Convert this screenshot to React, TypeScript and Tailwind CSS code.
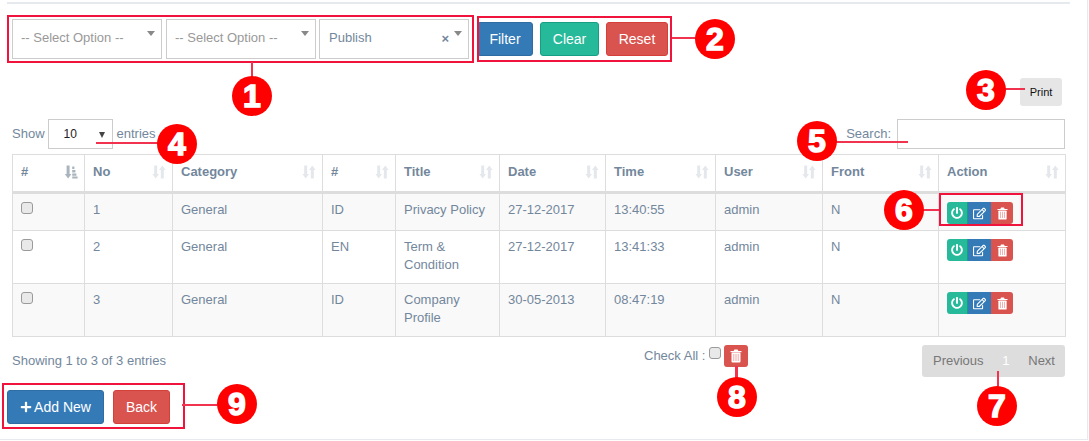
import { FaPlus, FaPowerOff, FaRegEdit } from 'react-icons/fa';

const columns = [
  { label: '#', width: 72, active: true },
  { label: 'No', width: 88 },
  { label: 'Category', width: 150 },
  { label: '#', width: 73 },
  { label: 'Title', width: 104 },
  { label: 'Date', width: 106 },
  { label: 'Time', width: 110 },
  { label: 'User', width: 107 },
  { label: 'Front', width: 116 },
  { label: 'Action', width: 127 },
];

const rows = [
  { no: 1, lang: 'ID', title: 'Privacy Policy', date: '27-12-2017', time: '13:40:55', height: 'h-[38px]', bg: 'bg-[#f9f9f9]' },
  { no: 2, lang: 'EN', title: 'Term & Condition', date: '27-12-2017', time: '13:41:33', height: 'h-[53px]', bg: 'bg-white' },
  { no: 3, lang: 'ID', title: 'Company Profile', date: '30-05-2013', time: '08:47:19', height: 'h-[53px]', bg: 'bg-[#f9f9f9]' },
];

// callouts sit on top of the screenshot, so these are absolute on purpose
const callouts = [
  { n: '1', pos: 'left-[232px] top-[76px]' },
  { n: '2', pos: 'left-[695px] top-[19px]' },
  { n: '3', pos: 'left-[966px] top-[70px]' },
  { n: '4', pos: 'left-[157px] top-[124px]' },
  { n: '5', pos: 'left-[797px] top-[121px]' },
  { n: '6', pos: 'left-[884px] top-[190px]' },
  { n: '7', pos: 'left-[977px] top-[386px]' },
  { n: '8', pos: 'left-[717px] top-[377px]' },
  { n: '9', pos: 'left-[217px] top-[384px]' },
];

const boxes = [
  'left-[7px] top-[15px] w-[467px] h-[48px]',
  'left-[477px] top-[16px] w-[195px] h-[46px]',
  'left-[939px] top-[193px] w-[84px] h-[33px]',
  'left-[2px] top-[383px] w-[183px] h-[46px]',
];

const lines = [
  'left-[251px] top-[62px] w-[2px] h-[16px]',
  'left-[672px] top-[37px] w-[24px] h-[2px]',
  'left-[1005px] top-[88px] w-[20px] h-[2px]',
  'left-[96px] top-[142px] w-[62px] h-[2px]',
  'left-[836px] top-[141px] w-[72px] h-[2px]',
  'left-[923px] top-[209px] w-[16px] h-[2px]',
  'left-[997px] top-[371px] w-[2px] h-[17px]',
  'left-[735px] top-[366px] w-[3px] h-[13px]',
  'left-[182px] top-[404px] w-[36px] h-[2px]',
];

function SortIcon({ active }: { active?: boolean }) {
  if (active) {
    return (
      <svg viewBox="0 0 14 14" className="h-[14px] w-[14px] text-[#aab4be]" fill="currentColor">
        <path d="M2.6.5h3v8.6h1.8L4.1 13.5.8 9.1h1.8z" />
        <path d="M8.2 1.5h2.2v2.4H8.2zM8.2 5h3.2v2.4H8.2zM8.2 8.5h4.2v2.2H8.2zM8.2 11.6h5.4v2H8.2z" />
      </svg>
    );
  }
  return (
    <svg viewBox="0 0 14 14" className="h-[14px] w-[14px] text-[#e4e8ec]" fill="currentColor">
      <path d="M2.2.5h3v8.6H7L3.7 13.5.4 9.1h1.8z" />
      <path d="M8.8 13.5h3V4.9h1.8L10.3.5 7 4.9h1.8z" />
    </svg>
  );
}

function TrashIcon({ className }: { className: string }) {
  return (
    <svg viewBox="0 0 12 14" className={className}>
      <path d="M3.6 2 4.4.5h3.2L8.4 2h3.1v1.2H.5V2z" fill="#ffffff" />
      <rect x="1.5" y="3.6" width="9" height="10" rx="1" fill="#ffffff" />
      <path d="M3.3 5h1v7h-1zM5.5 5h1v7h-1zM7.7 5h1v7h-1z" fill="#f0aaa8" />
    </svg>
  );
}

function FilterSelect({ label, clear }: { label: string; clear?: boolean }) {
  return (
    <div className={`relative flex h-[40px] w-[150px] items-center border border-[#cccccc] pb-[2px] text-[#999999] ${clear ? 'pl-[9px]' : 'pl-[8px]'}`}>
      <span className={clear ? 'text-[#73879C]' : ''}>{label}</span>
      {clear && <span className="absolute right-[19px] top-[10px] text-[13px] font-bold text-[#73879C]">×</span>}
      <span className="absolute right-[6px] top-[11px] h-0 w-0 border-x-[4px] border-t-[5px] border-x-transparent border-t-[#888888]" />
    </div>
  );
}

function Check() {
  return <input type="checkbox" className="m-0 block h-[12px] w-[12px] appearance-none rounded-[3px] border border-[#9a9a9a] bg-[#e9e9e9]" />;
}

function ActionButtons() {
  return (
    <div className="flex h-[22px] w-[66px] overflow-hidden rounded-[3px] text-white">
      <span className="flex w-[21px] items-center justify-center border-r border-[#169F85] bg-[#26B99A] text-[12px]"><FaPowerOff /></span>
      <span className="flex w-[23px] items-center justify-center bg-[#337ab7] text-[13px]"><FaRegEdit /></span>
      <span className="flex w-[22px] items-center justify-center bg-[#d9534f]"><TrashIcon className="h-[13px] w-[11px]" /></span>
    </div>
  );
}

export default function App() {
  const cell = 'border border-[#dddddd] pt-[7px] pr-[8px] pl-[8px] align-top';
  return (
    <div className="relative h-[441px] w-[1089px] overflow-hidden bg-white font-['Liberation_Sans',Arial,sans-serif] text-[13px] leading-[18px] text-[#73879C]">
      <div className="h-[440px] w-[1088px] border-r border-b border-[#E6E9ED] pt-[2px]">
        <div className="ml-[7px] h-[2px] w-[1063px] bg-[#E6E9ED]" />

        {/* Filters */}
        <div className="mt-[15px] flex items-start pl-[12px]">
          <FilterSelect label="-- Select Option --" />
          <div className="w-[4px]" />
          <FilterSelect label="-- Select Option --" />
          <div className="w-[3px]" />
          <FilterSelect label="Publish" clear />
          <div className="mt-[3px] ml-[8px] flex gap-[7px] text-[14px] text-white">
            <button className="h-[34px] w-[56px] rounded-[3px] border border-[#2e6da4] bg-[#337ab7]">Filter</button>
            <button className="h-[34px] w-[59px] rounded-[3px] border border-[#169F85] bg-[#26B99A]">Clear</button>
            <button className="h-[34px] w-[62px] rounded-[3px] border border-[#d43f3a] bg-[#d9534f]">Reset</button>
          </div>
        </div>

        <div className="mt-[19px] flex justify-end pr-[25px]">
          <button className="h-[28px] w-[42px] rounded-[3px] bg-[#e6e6e6] text-[11px] text-[#111111]">Print</button>
        </div>

        {/* Length + search */}
        <div className="mt-[13px] flex items-center justify-between pr-[22px] pl-[12px]">
          <div className="flex items-center">
            <span>Show</span>
            <div className="relative mr-[4px] ml-[3px] flex h-[30px] w-[65px] items-center border border-[#cccccc] pl-[15px] text-[12px] text-[#222222]">
              10
              <span className="absolute right-[7px] top-[12px] h-0 w-0 border-x-[3.5px] border-t-[6px] border-x-transparent border-t-[#444444]" />
            </div>
            <span>entries</span>
          </div>
          <div className="flex items-center gap-[6px]">
            <span>Search:</span>
            <input className="h-[30px] w-[168px] border border-[#cccccc] outline-none" />
          </div>
        </div>

        {/* Table */}
        <table className="mt-[5px] ml-[12px] w-[1053px] table-fixed border-collapse">
          <thead>
            <tr className="h-[38px]">
              {columns.map((c, i) => (
                <th key={i} style={{ width: c.width }} className="border border-b-[3px] border-[#dddddd] pl-[8px] text-left font-bold">
                  <div className="flex items-center justify-between pr-[6px] pb-[2px]">
                    {c.label}
                    <SortIcon active={c.active} />
                  </div>
                </th>
              ))}
            </tr>
          </thead>
          <tbody>
            {rows.map((r) => (
              <tr key={r.no} className={`${r.height} ${r.bg}`}>
                <td className={cell}><div className="pt-[1px]"><Check /></div></td>
                <td className={cell}>{r.no}</td>
                <td className={cell}>General</td>
                <td className={cell}>{r.lang}</td>
                <td className={cell}>{r.title}</td>
                <td className={cell}>{r.date}</td>
                <td className={cell}>{r.time}</td>
                <td className={cell}>admin</td>
                <td className={cell}>N</td>
                <td className={cell}><div className="pt-[1px]"><ActionButtons /></div></td>
              </tr>
            ))}
          </tbody>
        </table>

        {/* Footer */}
        <div className="mt-[8px] flex items-start pr-[22px] pl-[12px]">
          <div className="mt-[7px] w-[632px]">Showing 1 to 3 of 3 entries</div>
          <div className="flex w-[278px] items-center">
            <span>Check All :</span>
            <span className="mr-[3px] ml-[4px] -mt-[6px]"><Check /></span>
            <span className="flex h-[22px] w-[24px] items-center justify-center rounded-[3px] bg-[#d9534f]"><TrashIcon className="h-[14px] w-[12px]" /></span>
          </div>
          <div className="flex h-[32px] w-[143px] items-center justify-between rounded-[3px] bg-[#dddddd] pr-[10px] pl-[11px] text-[#777777]">
            <span>Previous</span>
            <span className="text-white">1</span>
            <span>Next</span>
          </div>
        </div>

        <div className="mt-[13px] flex gap-[9px] pl-[7px] text-[14px] text-white">
          <button className="flex h-[34px] w-[97px] items-center justify-center gap-[2px] rounded-[3px] border border-[#2e6da4] bg-[#337ab7]"><FaPlus className="text-[12px]" />Add New</button>
          <button className="h-[34px] w-[57px] rounded-[3px] border border-[#d43f3a] bg-[#d9534f]">Back</button>
        </div>
      </div>

      {/* Annotations */}
      {boxes.map((b) => (
        <div key={b} className={`absolute border-[2px] border-[#f0143c] ${b}`} />
      ))}
      {lines.map((l) => (
        <div key={l} className={`absolute bg-[#f2334f] ${l}`} />
      ))}
      {callouts.map((c) => (
        <div key={c.n} className={`absolute flex h-[40px] w-[40px] items-center justify-center rounded-full bg-[#ff0000] text-[32px] font-bold text-white [-webkit-text-stroke:1.5px_#ffffff] ${c.pos}`}>
          {c.n}
        </div>
      ))}
    </div>
  );
}
